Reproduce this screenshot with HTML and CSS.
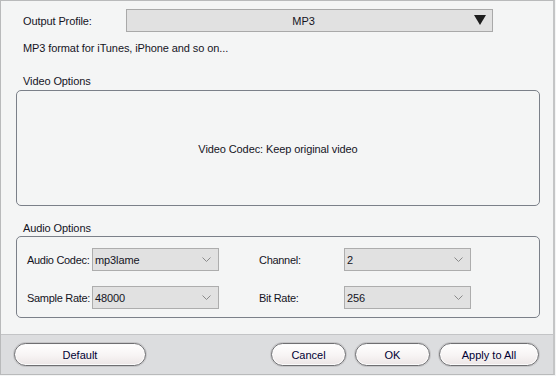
FILE: index.html
```html
<!DOCTYPE html>
<html>
<head>
<meta charset="utf-8">
<link rel="stylesheet" href="styles.css">
</head>
<body>
<div class="window">
  <div class="content">
    <div class="profile-row">
      <span class="profile-label">Output Profile:</span>
      <div class="profile-select">
        <span class="profile-value">MP3</span>
        <svg class="profile-arrow" width="12" height="10" viewBox="0 0 12 10"><path d="M0 0H12L6 10Z" fill="#1e1e1e"/></svg>
      </div>
    </div>
    <div class="desc">MP3 format for iTunes, iPhone and so on...</div>
    <div class="group-title">Video Options</div>
    <div class="group video-group">Video Codec: Keep original video</div>
    <div class="group-title audio-title">Audio Options</div>
    <div class="group audio-group">
      <div class="audio-grid">
        <span class="field-label">Audio Codec:</span>
        <div class="combo"><span>mp3lame</span><svg class="chev" width="9" height="5" viewBox="0 0 9 5"><path d="M0.5 0.5L4.5 4.5L8.5 0.5" fill="none" stroke="#8a8a8a" stroke-width="1"/></svg></div>
        <span class="field-label right-label">Channel:</span>
        <div class="combo"><span>2</span><svg class="chev" width="9" height="5" viewBox="0 0 9 5"><path d="M0.5 0.5L4.5 4.5L8.5 0.5" fill="none" stroke="#8a8a8a" stroke-width="1"/></svg></div>
        <span class="field-label">Sample Rate:</span>
        <div class="combo"><span>48000</span><svg class="chev" width="9" height="5" viewBox="0 0 9 5"><path d="M0.5 0.5L4.5 4.5L8.5 0.5" fill="none" stroke="#8a8a8a" stroke-width="1"/></svg></div>
        <span class="field-label right-label">Bit Rate:</span>
        <div class="combo"><span>256</span><svg class="chev" width="9" height="5" viewBox="0 0 9 5"><path d="M0.5 0.5L4.5 4.5L8.5 0.5" fill="none" stroke="#8a8a8a" stroke-width="1"/></svg></div>
      </div>
    </div>
  </div>
  <div class="footer">
    <button class="btn btn-default">Default</button>
    <div class="spacer"></div>
    <button class="btn btn-cancel">Cancel</button>
    <button class="btn btn-ok">OK</button>
    <button class="btn btn-apply">Apply to All</button>
  </div>
</div>
</body>
</html>
```
FILE: styles.css
```css
html, body {
  margin: 0;
  padding: 0;
  background: #f4f5f5;
}
body {
  width: 556px;
  height: 376px;
  font-family: "Liberation Sans", Arial, sans-serif;
  font-size: 11px;
  letter-spacing: -0.1px;
  color: #14141e;
  overflow: hidden;
}
.window {
  box-sizing: border-box;
  width: 555px;
  height: 375px;
  border: 1px solid #b9babb;
  border-right: 2px solid #c4c5c6;
  background: #f4f5f5;
  display: flex;
  flex-direction: column;
}
.content {
  flex: 1;
  padding: 8px 0 0 15px;
}
.profile-row {
  display: flex;
  align-items: center;
  height: 23px;
}
.profile-label {
  width: 103px;
  padding-left: 7px;
}
.profile-select {
  box-sizing: border-box;
  width: 367px;
  height: 23px;
  background: #e1e1e1;
  border: 1px solid #a9a9a9;
  display: flex;
  align-items: center;
  position: relative;
}
.profile-value {
  flex: 1;
  text-align: center;
  padding-right: 12px;
}
.profile-arrow {
  position: absolute;
  right: 6px;
  top: 5px;
}
.desc {
  margin-top: 8px;
  padding-left: 7px;
  height: 14px;
  line-height: 16px;
}
.group-title {
  margin-top: 19px;
  padding-left: 7px;
  height: 14px;
  line-height: 16px;
}
.group {
  box-sizing: border-box;
  width: 524px;
  border: 1px solid #7b8089;
  border-radius: 5px;
  background: #f4f5f5;
}
.video-group {
  margin-top: 3px;
  height: 116px;
  display: flex;
  align-items: center;
  justify-content: center;
  padding-top: 2px;
}
.audio-title {
  margin-top: 14px;
}
.audio-group {
  margin-top: 2px;
  height: 82px;
  padding: 11px 0 0 10px;
}
.audio-grid {
  display: grid;
  grid-template-columns: 65px 127px 40px 85px 127px;
  grid-template-rows: 23px 23px;
  row-gap: 15px;
  align-items: center;
}
.field-label {
  white-space: nowrap;
  letter-spacing: -0.3px;
}
.right-label {
  grid-column: 4;
}
.combo {
  box-sizing: border-box;
  height: 23px;
  background: #e1e1e1;
  border: 1px solid #adadad;
  display: flex;
  align-items: center;
  justify-content: space-between;
  padding: 0 7px 0 2px;
}
.chev {
  display: block;
}
.footer {
  height: 39px;
  border-top: 1px solid #c3c4c6;
  background: #dcdddf;
  display: flex;
  align-items: center;
  padding: 0 0 0 13px;
  gap: 9px;
}
.spacer {
  flex: 1;
}
.btn {
  box-sizing: border-box;
  height: 23px;
  border: 1px solid #6f6f72;
  border-radius: 12px;
  background: linear-gradient(#ffffff, #f7f4f4 55%, #ece6e6);
  box-shadow: 0 0 0 1px #c6c6c8, inset 0 0 0 1px #fbfbfb;
  font-family: "Liberation Sans", Arial, sans-serif;
  font-size: 11px;
  color: #000033;
  padding: 0;
}
.btn-default {
  width: 132px;
}
.btn-cancel {
  width: 75px;
}
.btn-ok {
  width: 75px;
}
.btn-apply {
  width: 100px;
  margin-right: 14px;
}
```
